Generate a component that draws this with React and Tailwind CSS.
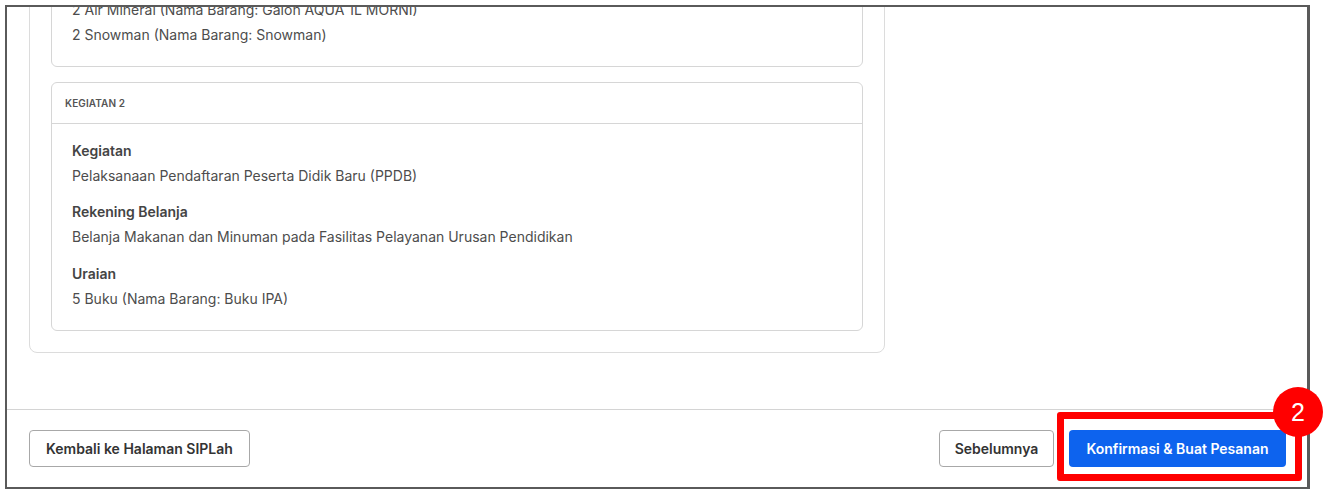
export default function App() {
  const font = { fontFamily: 'Inter, "Noto Sans", sans-serif' };
  return (
    <div className="w-[1328px] h-[497px] bg-white overflow-hidden" style={font}>
      <div className="ml-[5px] mt-[5px] w-[1305px] h-[484px] border-2 border-r-[3px] border-[#5a5a5a] flex flex-col bg-white">
        {/* scrolled content area */}
        <div className="flex-1 min-h-0 overflow-hidden flex flex-col justify-end pl-[22px] pb-[56px]">
          <div className="w-[856px] border border-[#dcdcdc] rounded-lg px-[21px] pb-[21px] pt-[21px] flex flex-col gap-[15px]">
            <Card
              title="KEGIATAN 1"
              kegiatan="Pelaksanaan Pendaftaran Peserta Didik Baru (PPDB)"
              rekening="Belanja Makanan dan Minuman pada Fasilitas Pelayanan Urusan Pendidikan"
              uraian={[
                "3 Roti (Nama Barang: Roti Tawar)",
                "2 Air Mineral (Nama Barang: Galon AQUA 1L MORNI)",
                "2 Snowman (Nama Barang: Snowman)",
              ]}
            />
            <Card
              title="KEGIATAN 2"
              kegiatan="Pelaksanaan Pendaftaran Peserta Didik Baru (PPDB)"
              rekening="Belanja Makanan dan Minuman pada Fasilitas Pelayanan Urusan Pendidikan"
              uraian={["5 Buku (Nama Barang: Buku IPA)"]}
            />
          </div>
        </div>
        {/* footer */}
        <div className="h-[78px] border-t border-[#d4d4d4] flex items-start justify-between pl-[22px] pr-[21px] pt-[20px]">
          <button className="h-[37px] px-[16px] border border-[#a8a8a8] rounded-[4px] bg-white text-[14px] font-semibold text-[#333]">
            Kembali ke Halaman SIPLah
          </button>
          <div className="flex items-start gap-[15px]">
            <button className="h-[37px] w-[115px] border border-[#a8a8a8] rounded-[4px] bg-white text-[14px] font-semibold text-[#333]">
              Sebelumnya
            </button>
            <div className="relative">
              <button className="h-[37px] w-[217px] rounded-[4px] bg-[#0d63ee] text-[14px] font-semibold text-white">
                Konfirmasi &amp; Buat Pesanan
              </button>
              <div className="absolute left-[-12px] top-[-18px] right-[-16px] bottom-[-14px] border-[7px] border-[#ff0000] rounded-[3px] pointer-events-none" />
              <div className="absolute left-[204px] top-[-43px] w-[50px] h-[50px] rounded-full bg-[#ff0000] flex items-center justify-center text-white text-[25px] font-medium leading-none" style={{ fontFamily: '"Liberation Sans", Arial, sans-serif' }}>
                2
              </div>
            </div>
          </div>
        </div>
      </div>
    </div>
  );
}

function Card({ title, kegiatan, rekening, uraian }) {
  return (
    <div className="border border-[#d6d6d6] rounded-[6px] bg-white">
      <div className="h-[41px] border-b border-[#d6d6d6] flex items-center pl-[13px] text-[10px] font-semibold text-[#555] tracking-[0.1px]">
        {title}
      </div>
      <div className="pl-[20px] pr-[20px] pt-[14px] pb-[19px] text-[14px] text-[#4d4d4d]">
        <div className="font-semibold text-[#444] leading-[25px]">Kegiatan</div>
        <div className="leading-[25px]">{kegiatan}</div>
        <div className="font-semibold text-[#444] leading-[25px] mt-[11px]">Rekening Belanja</div>
        <div className="leading-[25px]">{rekening}</div>
        <div className="font-semibold text-[#444] leading-[25px] mt-[12px]">Uraian</div>
        {uraian.map((u) => (
          <div key={u} className="leading-[25px]">{u}</div>
        ))}
      </div>
    </div>
  );
}
